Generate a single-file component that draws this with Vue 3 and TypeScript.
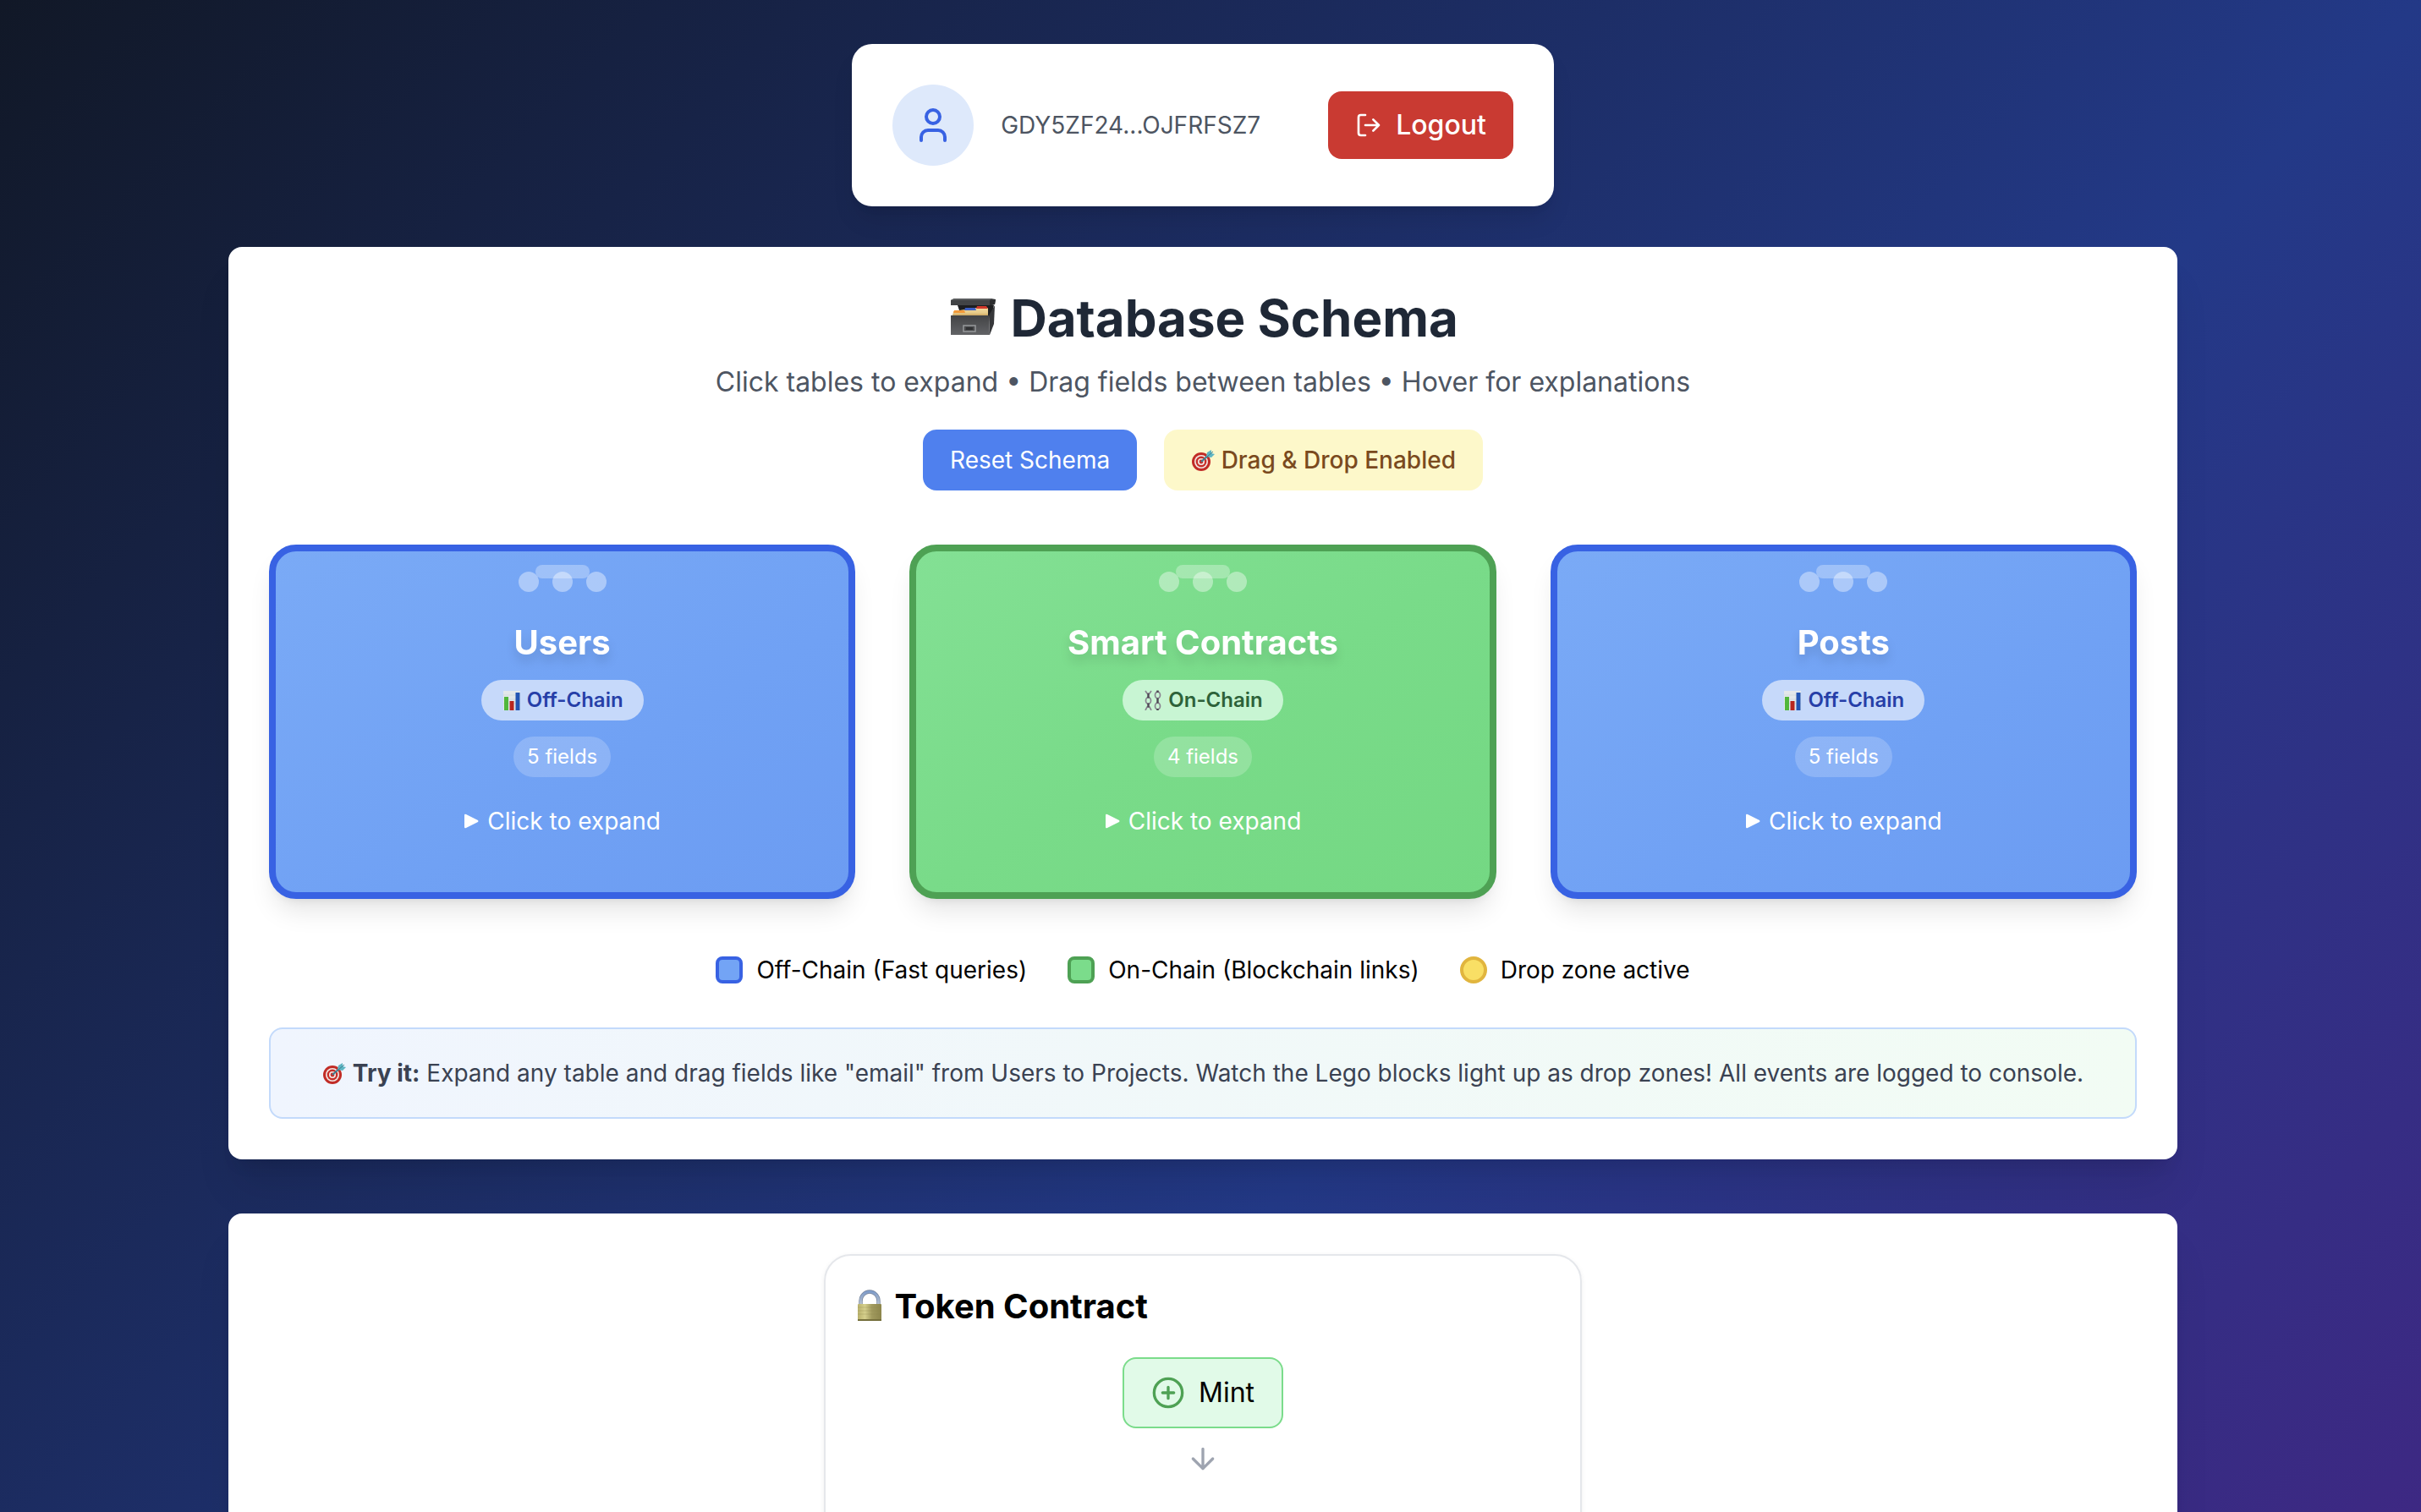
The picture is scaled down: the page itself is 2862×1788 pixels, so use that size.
<script setup lang="ts">
import { ref } from 'vue'

interface SchemaTable {
  name: string
  chain: 'off' | 'on'
  badge: string
  fields: number
}

const tables = ref<SchemaTable[]>([
  { name: 'Users', chain: 'off', badge: 'Off-Chain', fields: 5 },
  { name: 'Smart Contracts', chain: 'on', badge: 'On-Chain', fields: 4 },
  { name: 'Posts', chain: 'off', badge: 'Off-Chain', fields: 5 },
])

const legend = [
  { key: 'off', label: 'Off-Chain (Fast queries)' },
  { key: 'on', label: 'On-Chain (Blockchain links)' },
  { key: 'drop', label: 'Drop zone active' },
]
</script>

<template>
  <div class="page">
    <!-- Shared pictograms -->
    <svg class="defs" aria-hidden="true">
      <defs>
        <linearGradient id="g-box" x1="0" y1="0" x2="0" y2="1">
          <stop offset="0" stop-color="#424345" />
          <stop offset="1" stop-color="#626366" />
        </linearGradient>
        <linearGradient id="g-folder" x1="0" y1="0" x2="0" y2="1">
          <stop offset="0" stop-color="#f3dca0" />
          <stop offset="1" stop-color="#d9b872" />
        </linearGradient>
        <linearGradient id="g-brass" x1="0" y1="0" x2="1" y2="0">
          <stop offset="0" stop-color="#b9b16c" />
          <stop offset="0.3" stop-color="#d5cf8c" />
          <stop offset="0.6" stop-color="#a19a5e" />
          <stop offset="1" stop-color="#8d864c" />
        </linearGradient>
        <linearGradient id="g-shackle" x1="0" y1="0" x2="0" y2="1">
          <stop offset="0" stop-color="#7f9cc9" />
          <stop offset="1" stop-color="#b9c2cf" />
        </linearGradient>
      </defs>
      <symbol id="i-cabinet" viewBox="0 0 60 60">
        <path d="M12 14 50 12 55 14 52 27H34L14 20Z" fill="#1d1e20" />
        <path d="M4 8 8 6H52L57 7 56 13 50 14H4Z" fill="#424446" />
        <path d="M4 8 8 6H52L50 8Z" fill="#5a5c5e" />
        <path d="M50 8 57 7 56 13 50 14Z" fill="#2b2c2e" />
        <path d="M7 21 21 19 34 17 48 17 48 29H6Z" fill="url(#g-folder)" />
        <path d="M34 18 35 15H46L48 18Z" fill="#d0392c" />
        <path d="M20 20 21 17H33L34 20Z" fill="#3c5fc4" />
        <path d="M7 23 8 20H20L21 23Z" fill="#f29a3a" />
        <path d="M6 25H48" stroke="#c9a25c" stroke-width="1" />
        <path d="M49 26 56 14 55 36 50 49Z" fill="#36373a" />
        <path d="M4 26H49L50 49H4Z" fill="url(#g-box)" />
        <rect x="19" y="38" width="14" height="7" fill="#4a4b4d" stroke="#97999b" stroke-width="1.5" />
        <rect x="22" y="40" width="8" height="3" fill="#303133" />
      </symbol>
      <symbol id="i-target" viewBox="0 0 28 28">
        <circle cx="12" cy="16" r="11" fill="#c12c26" />
        <circle cx="12" cy="16" r="8" fill="#f3e9e6" />
        <circle cx="12" cy="16" r="6.400" fill="#c8302a" />
        <circle cx="12" cy="16" r="4" fill="#f3e9e6" />
        <circle cx="12" cy="16" r="2.400" fill="#c8302a" />
        <path d="M12 16 22 7" stroke="#3d7f91" stroke-width="2" />
        <path d="M18 10 19 5 24 2 24 6 28 7 24 11Z" fill="#5fb6c4" />
        <path d="M19 10 26 4" stroke="#397b8c" stroke-width="1" />
      </symbol>
      <symbol id="i-chart" viewBox="0 0 24 24">
        <rect x="2" y="1" width="20" height="23" fill="#e3e8ea" />
        <path d="M2 6H22M2 11H22M2 16H22" stroke="#ccd5da" stroke-width="0.7" />
        <rect x="3" y="8" width="5" height="16" fill="#50b73c" />
        <rect x="9.500" y="13" width="5" height="11" fill="#b8261f" />
        <rect x="16.500" y="3" width="5" height="21" fill="#2355b4" />
      </symbol>
      <symbol id="i-chains" viewBox="0 0 24 24">
        <g fill="none" stroke="#8a8490" stroke-width="1.700">
          <path d="M3 1 5 4H8L10 1M3 24 5 20H8L10 24" />
          <ellipse cx="6.500" cy="12.500" rx="3" ry="3.800" />
          <ellipse cx="17.500" cy="6" rx="3" ry="3.800" />
          <ellipse cx="17.500" cy="19" rx="3" ry="3.800" />
        </g>
        <path d="M6.500 4V9.500M6.500 15.500V20.500M17.500 0.500V3M17.500 9.500V15.500M17.500 22V24" stroke="#4d4653" stroke-width="2.400" />
      </symbol>
      <symbol id="i-lock" viewBox="0 0 40 40">
        <path d="M9.500 18V13.500a10.500 11 0 0 1 21 0V18" fill="none" stroke="#75839a" stroke-width="4.400" />
        <path d="M9.500 18V13.500a10.500 11 0 0 1 21 0V18" fill="none" stroke="url(#g-shackle)" stroke-width="3" />
        <rect x="6" y="17" width="28" height="20" rx="1" fill="url(#g-brass)" />
        <path d="M6 21H34M6 25H34M6 29H34" stroke="#8d864c" stroke-width="0.5" opacity="0.6" />
        <rect x="6" y="35" width="28" height="2" fill="#756f3c" />
      </symbol>
    </svg>

    <header class="account">
      <span class="avatar">
        <svg class="avatar-icon stroke-icon" viewBox="0 0 24 24" aria-hidden="true">
          <path d="M19 21v-2a4 4 0 0 0-4-4H9a4 4 0 0 0-4 4v2" />
          <circle cx="12" cy="7" r="4" />
        </svg>
      </span>
      <span class="address">GDY5ZF24...OJFRFSZ7</span>
      <button type="button" class="logout">
        <svg class="logout-icon stroke-icon" viewBox="0 0 24 24" aria-hidden="true">
          <path d="M9 21H5a2 2 0 0 1-2-2V5a2 2 0 0 1 2-2h4M16 17l5-5-5-5M21 12H9" />
        </svg>
        Logout
      </button>
    </header>

    <main class="content">
      <section class="panel">
        <h1 class="title"><svg class="emoji" aria-hidden="true"><use href="#i-cabinet" /></svg> Database Schema</h1>
        <p class="subtitle">Click tables to expand • Drag fields between tables • Hover for explanations</p>
        <div class="actions">
          <button type="button" class="reset">Reset Schema</button>
          <span class="status"><svg class="emoji" aria-hidden="true"><use href="#i-target" /></svg> Drag &amp; Drop Enabled</span>
        </div>

        <div class="tables">
          <article v-for="table in tables" :key="table.name" class="block" :class="table.chain">
            <span class="ridge"></span>
            <span class="studs"><i></i><i></i><i></i></span>
            <h2 class="block-name">{{ table.name }}</h2>
            <span class="badge"><svg class="emoji" aria-hidden="true"><use :href="table.chain === 'off' ? '#i-chart' : '#i-chains'" /></svg> {{ table.badge }}</span>
            <span class="count">{{ table.fields }} fields</span>
            <button type="button" class="expand">
              <svg class="play" viewBox="0 0 18 18" aria-hidden="true">
                <path d="M1 2 Q1 0 3 1 L17 8 Q18 9 17 10 L3 17 Q1 18 1 16Z" />
              </svg>
              Click to expand
            </button>
          </article>
        </div>

        <ul class="legend">
          <li v-for="item in legend" :key="item.key"><span class="swatch" :class="item.key"></span>{{ item.label }}</li>
        </ul>

        <p class="tip"><svg class="emoji" aria-hidden="true"><use href="#i-target" /></svg> <strong>Try it:</strong> Expand any table and drag fields like "email" from Users to Projects. Watch the Lego blocks light up as drop zones! All events are logged to console.</p>
      </section>

      <section class="panel">
        <div class="token">
          <h2 class="token-title"><svg class="emoji" aria-hidden="true"><use href="#i-lock" /></svg> Token Contract</h2>
          <div class="flow">
            <button type="button" class="mint">
              <svg class="flow-icon stroke-icon" viewBox="0 0 24 24" aria-hidden="true">
                <circle cx="12" cy="12" r="10" />
                <path d="M8 12h8M12 8v8" />
              </svg>
              Mint
            </button>
            <svg class="flow-icon arrow stroke-icon" viewBox="0 0 24 24" aria-hidden="true">
              <path d="M12 5v14M19 12l-7 7-7-7" />
            </svg>
          </div>
        </div>
      </section>
    </main>
  </div>
</template>

<style>
body {
  margin: 0;
}
</style>

<style scoped>
* {
  box-sizing: border-box;
}

.page {
  height: 100vh;
  overflow: hidden;
  display: flex;
  flex-direction: column;
  align-items: center;
  gap: 48px;
  padding: 52px 18px 0 0;
  background: linear-gradient(to bottom right, #111827, #233987 50%, #4f1d80) 0 0 / 100% 168vh no-repeat;
  font-family: Inter, "Liberation Sans", sans-serif;
  font-size: 28px;
  line-height: 40px;
  color: #000;
}

h1,
h2,
p,
ul {
  margin: 0;
  padding: 0;
}

button {
  border: 0;
  font: inherit;
  cursor: pointer;
}

.defs {
  position: absolute;
  width: 0;
  height: 0;
}

.stroke-icon {
  fill: none;
  stroke: currentColor;
  stroke-width: 2;
  stroke-linecap: round;
  stroke-linejoin: round;
}

.emoji {
  width: 1em;
  height: 1em;
  vertical-align: -0.15em;
}

.account {
  display: flex;
  flex: none;
  align-items: center;
  padding: 48px;
  border-radius: 24px;
  background: #fff;
  box-shadow: 0 20px 30px -6px rgba(0, 0, 0, 0.1), 0 8px 12px -8px rgba(0, 0, 0, 0.1);
}

.avatar {
  display: flex;
  align-items: center;
  justify-content: center;
  width: 96px;
  height: 96px;
  border-radius: 50%;
  background: #dee9fb;
  color: #3862e3;
}

.avatar-icon {
  width: 48px;
  height: 48px;
}

.address {
  margin: 0 80px 0 32px;
  color: #4d5562;
}

.logout {
  display: flex;
  align-items: center;
  gap: 16px;
  padding: 16px 32px;
  border-radius: 16px;
  background: #c93a32;
  color: #fff;
  font-size: 32px;
  font-weight: 500;
  line-height: 48px;
}

.logout-icon {
  width: 32px;
  height: 32px;
}

.content {
  display: flex;
  flex-direction: column;
  gap: 64px;
  width: 100%;
  max-width: 2304px;
}

.panel {
  padding: 48px;
  border-radius: 16px;
  background: #fff;
  box-shadow: 0 40px 50px -10px rgba(0, 0, 0, 0.1), 0 16px 20px -12px rgba(0, 0, 0, 0.1);
  text-align: center;
}

.title {
  color: #1f2836;
  font-size: 60px;
  font-weight: 700;
  line-height: 72px;
}

.subtitle {
  margin-top: 16px;
  color: #4d5562;
  font-size: 32px;
  line-height: 48px;
}

.actions {
  display: flex;
  justify-content: center;
  gap: 32px;
  margin-top: 32px;
}

.reset,
.status {
  padding: 16px 32px;
  border-radius: 16px;
}

.reset {
  background: #4f80ee;
  color: #fff;
}

.status {
  background: #fdf8ca;
  color: #7a4a1e;
  font-weight: 500;
}

.tables {
  display: grid;
  grid-template-columns: repeat(3, 1fr);
  gap: 64px;
  margin-top: 64px;
}

.block {
  position: relative;
  display: flex;
  flex-direction: column;
  align-items: center;
  padding: 80px 48px 64px;
  border: 8px solid;
  border-radius: 32px;
  color: #fff;
  box-shadow: 0 20px 30px -6px rgba(0, 0, 0, 0.1), 0 8px 12px -8px rgba(0, 0, 0, 0.1);
}

.block.off {
  border-color: #3862e3;
  background: linear-gradient(to bottom right, #7aaaf6, #70a1f4 60%, #6c9cf2);
}

.block.on {
  border-color: #4ea154;
  background: linear-gradient(to bottom right, #83e094, #79db89 50%, #74d883);
}

.ridge,
.studs {
  position: absolute;
  left: 50%;
  transform: translateX(-50%);
}

.ridge {
  top: 16px;
  width: 64px;
  height: 16px;
  border-radius: 8px;
  background: rgba(255, 255, 255, 0.3);
}

.studs {
  top: 24px;
  display: flex;
  gap: 16px;
}

.studs i {
  width: 24px;
  height: 24px;
  border-radius: 50%;
  background: rgba(255, 255, 255, 0.4);
}

.block-name {
  font-size: 40px;
  font-weight: 700;
  line-height: 56px;
  filter: drop-shadow(0 8px 6px rgba(0, 0, 0, 0.12));
}

.badge,
.count {
  padding: 8px 16px;
  border-radius: 24px;
  font-size: 24px;
  line-height: 32px;
}

.badge {
  margin-top: 16px;
  padding: 8px 24px;
  font-weight: 600;
}

.off .badge {
  background: #c6d9fa;
  color: #263fa8;
}

.on .badge {
  background: #c8f5d3;
  color: #2d6239;
}

.count {
  margin-top: 19px;
  background: rgba(255, 255, 255, 0.2);
}

.expand {
  display: flex;
  align-items: center;
  gap: 10px;
  margin-top: 32px;
  padding: 0;
  background: none;
  color: #fff;
}

.play {
  width: 18px;
  height: 18px;
  fill: currentColor;
}

.legend {
  display: flex;
  justify-content: center;
  gap: 48px;
  margin-top: 64px;
  list-style: none;
}

.legend li {
  display: flex;
  align-items: center;
  gap: 16px;
}

.swatch {
  width: 32px;
  height: 32px;
  border: 4px solid;
  border-radius: 8px;
}

.swatch.off {
  border-color: #3862e3;
  background: #73a4f5;
}

.swatch.on {
  border-color: #4ea154;
  background: #7bdc8b;
}

.swatch.drop {
  border-color: #e1b53e;
  border-radius: 50%;
  background: #f9df65;
}

.tip {
  margin-top: 48px;
  padding: 32px;
  border: 2px solid #c3dafb;
  border-radius: 16px;
  background: linear-gradient(to right, #f0f5fe, #f2fcf4);
  color: #3a4252;
}

.tip strong {
  font-weight: 700;
}

.token {
  max-width: 896px;
  height: 800px;
  margin: 0 auto;
  padding: 32px;
  border: 2px solid #e5e7eb;
  border-radius: 32px;
  box-shadow: 0 2px 6px rgba(0, 0, 0, 0.06), 0 2px 4px -2px rgba(0, 0, 0, 0.06);
}

.token-title {
  font-size: 40px;
  font-weight: 700;
  line-height: 56px;
  text-align: left;
}

.flow {
  display: flex;
  flex-direction: column;
  align-items: center;
  gap: 16px;
  margin-top: 32px;
}

.mint {
  display: flex;
  align-items: center;
  gap: 16px;
  padding: 16px 32px;
  border: 2px solid #7bdc8b;
  border-radius: 16px;
  background: #e1fae8;
  color: #000;
  font-size: 32px;
  line-height: 48px;
}

.flow-icon {
  width: 40px;
  height: 40px;
}

.mint .flow-icon {
  color: #4ea154;
}

.arrow {
  color: #9ea4b0;
}
</style>
